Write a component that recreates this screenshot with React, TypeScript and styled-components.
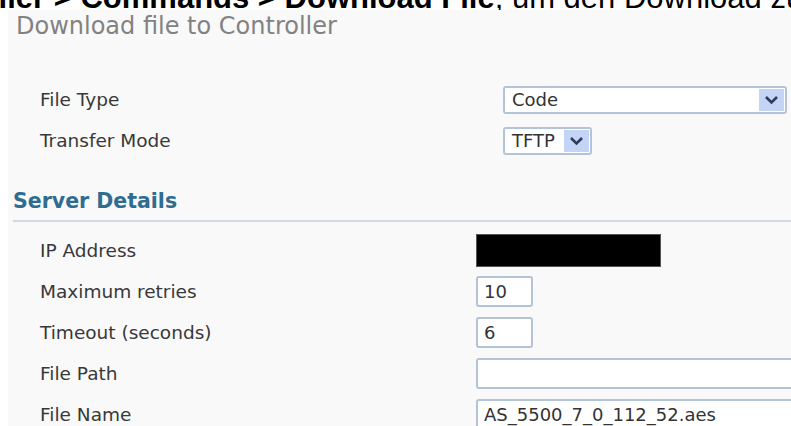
import styled, { createGlobalStyle } from 'styled-components';

const GlobalStyle = createGlobalStyle`
  html, body {
    margin: 0;
    padding: 0;
    background: #ffffff;
    overflow: hidden;
  }
  body {
    width: 791px;
    height: 426px;
  }
`;

const Page = styled.div`
  width: 791px;
  height: 426px;
  overflow: hidden;
  background: #ffffff;
`;

// lead-in sentence above the panel, only its lower edge shows
const Caption = styled.div`
  height: 10px;
  overflow: hidden;
  white-space: nowrap;
`;

const CaptionLine = styled.div`
  font-family: "Liberation Sans", Arial, sans-serif;
  font-size: 31px;
  line-height: 10px;
  color: #000;
  margin-top: -7px;
  margin-left: -103px;
`;

const Panel = styled.div`
  margin-left: 8px;
  background: #f9f9f9;
  padding-top: 2px;
  height: 420px;
  font-family: "DejaVu Sans", Verdana, sans-serif;
`;

const Title = styled.div`
  font-size: 24px;
  line-height: 29px;
  color: #828282;
  padding-left: 8px;
  margin-bottom: 38px;
`;

const Row = styled.div<{ $labelWidth: number }>`
  display: grid;
  grid-template-columns: ${({ $labelWidth }) => $labelWidth}px 1fr;
  align-items: center;
  height: 41px;
  padding-left: 32px;
`;

const Label = styled.span`
  font-size: 18.5px;
  color: #383838;
`;

const SectionHeader = styled.div`
  margin: 28px 0 8px 5px;
  padding-bottom: 7px;
  border-bottom: 2px solid #cfd9e5;
  font-size: 20.5px;
  font-weight: bold;
  line-height: 24px;
  color: #2f6c92;
`;

const Select = styled.div<{ $width: number }>`
  box-sizing: border-box;
  width: ${({ $width }) => $width}px;
  height: 28px;
  display: flex;
  align-items: center;
  justify-content: space-between;
  background: #ffffff;
  border: 2px solid #b3c4d8;
  border-radius: 3px;
  padding: 0 1px 0 7px;
  font-size: 18px;
  color: #333;
`;

const DropButton = styled.span`
  width: 25px;
  height: 22px;
  display: flex;
  align-items: center;
  justify-content: center;
  background: #c3d4f6;
`;

const Field = styled.div<{ $width: number }>`
  box-sizing: border-box;
  width: ${({ $width }) => $width}px;
  height: 31px;
  display: flex;
  align-items: center;
  background: #ffffff;
  border: 2px solid #b3c4d8;
  border-radius: 3px;
  padding: 0 6px;
  font-size: 18px;
  color: #333;
  white-space: nowrap;
`;

const Redacted = styled.div`
  width: 185px;
  height: 33px;
  box-sizing: border-box;
  background: #000;
  border: 1px solid #555;
`;

const Chevron = () => (
  <svg width="15" height="10" viewBox="0 0 15 10">
    <path d="M2 2 L7.5 7.5 L13 2" fill="none" stroke="#2c3b58" strokeWidth="2.6" />
  </svg>
);

export default function App() {
  return (
    <Page>
      <GlobalStyle />
      <Caption>
        <CaptionLine>
          <b>Controller &gt; Commands &gt; Download File</b>, um den Download zu starten.
        </CaptionLine>
      </Caption>
      <Panel>
        <Title>Download file to Controller</Title>

        <Row $labelWidth={463}>
          <Label>File Type</Label>
          <Select $width={284}>
            Code
            <DropButton><Chevron /></DropButton>
          </Select>
        </Row>
        <Row $labelWidth={463}>
          <Label>Transfer Mode</Label>
          <Select $width={89}>
            TFTP
            <DropButton><Chevron /></DropButton>
          </Select>
        </Row>

        <SectionHeader>Server Details</SectionHeader>

        <Row $labelWidth={436}>
          <Label>IP Address</Label>
          <Redacted />
        </Row>
        <Row $labelWidth={436}>
          <Label>Maximum retries</Label>
          <Field $width={57}>10</Field>
        </Row>
        <Row $labelWidth={436}>
          <Label>Timeout (seconds)</Label>
          <Field $width={57}>6</Field>
        </Row>
        <Row $labelWidth={436}>
          <Label>File Path</Label>
          <Field $width={340} />
        </Row>
        <Row $labelWidth={436}>
          <Label>File Name</Label>
          <Field $width={340}>AS_5500_7_0_112_52.aes</Field>
        </Row>
      </Panel>
    </Page>
  );
}
